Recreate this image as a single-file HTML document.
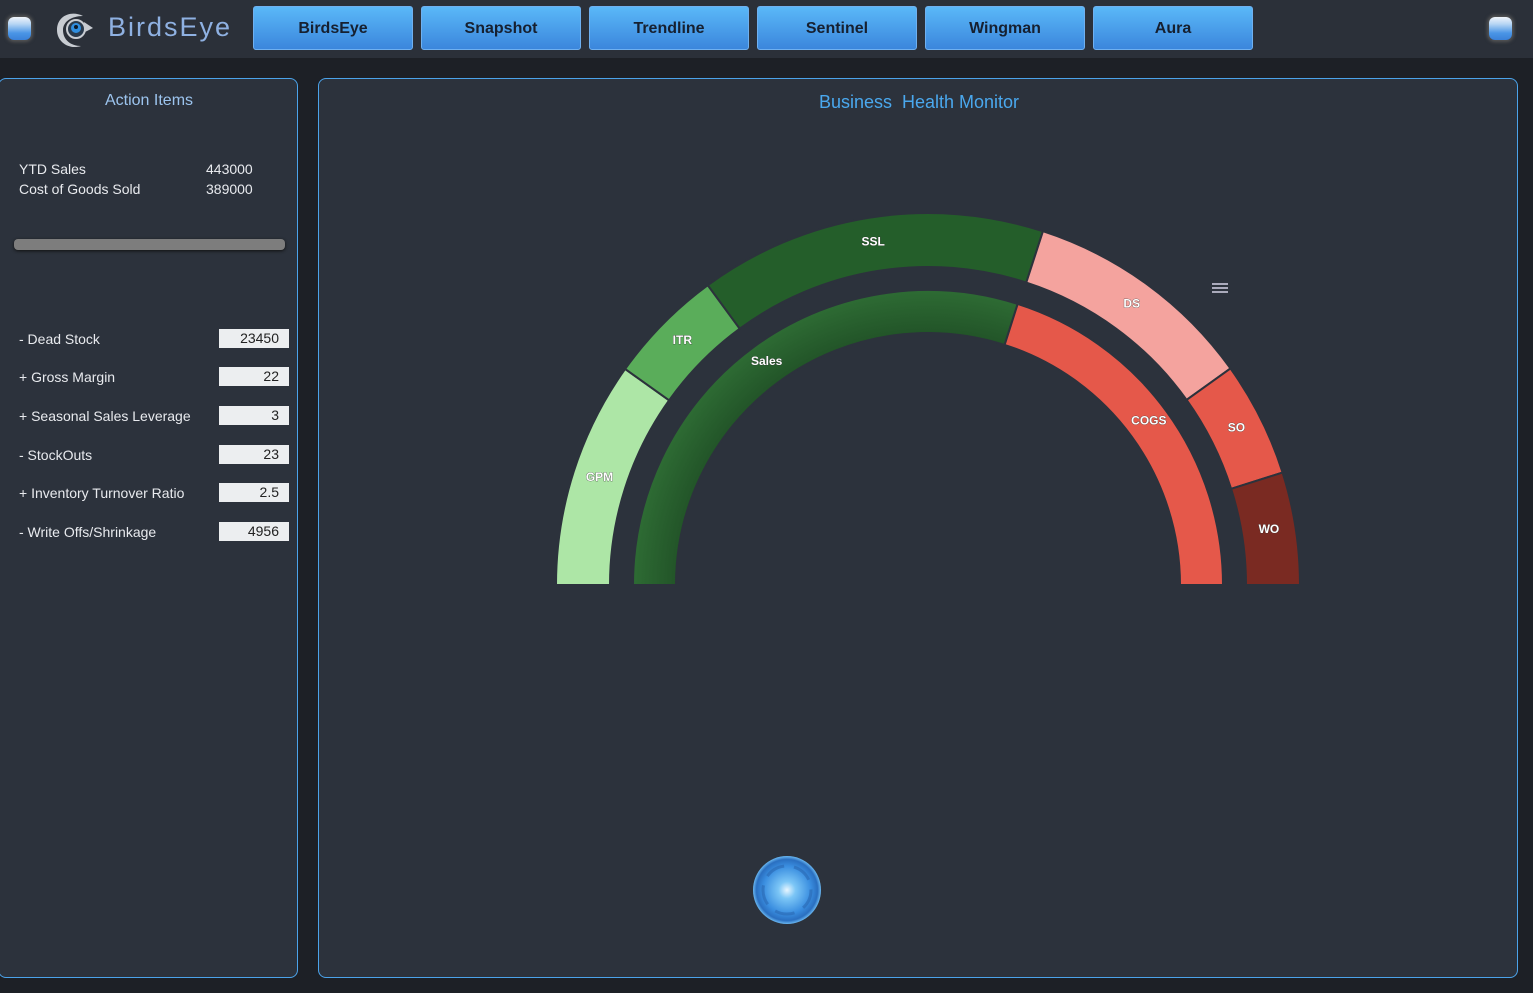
<!DOCTYPE html>
<html><head><meta charset="utf-8">
<style>
*{margin:0;padding:0;box-sizing:border-box}
body{width:1533px;height:993px;background:#1d2026;font-family:"Liberation Sans",sans-serif;position:relative;overflow:hidden;color:#e6e8ec}
.top{position:absolute;left:0;top:0;width:1533px;height:58px;background:#2b3039}
.sq{position:absolute;width:23px;height:23px;border-radius:6px;background:linear-gradient(#f0f4fa 0%,#b8d6f4 30%,#4a95e6 70%,#3a80d8 100%);box-shadow:0 0 3px 2px #555}
.btn{position:absolute;top:6px;width:160px;height:44px;border-radius:3px;background:linear-gradient(#5ab8f8,#3b86dc);color:#162030;font-weight:bold;font-size:16px;text-align:center;line-height:44px;border:1px solid #6fb0f0}
.panel{position:absolute;background:#2c323c;border:1px solid #4ba3ea;border-radius:8px}
.row{position:absolute;left:19px;font-size:14px;color:#e8eaee}
.val{position:absolute;left:219px;width:70px;height:19px;background:#eceef0;color:#222;font-size:14px;text-align:right;padding-right:10px;line-height:19px}
</style></head><body>
<div class="top">
 <div class="sq" style="left:8px;top:17px"></div>
 <svg style="position:absolute;left:53px;top:10px" width="42" height="40" viewBox="0 0 42 40">
  <path d="M30 6 C18 0 4 6 4 20 C4 32 16 40 28 36 C18 36 10 30 10 20 C10 12 18 6 30 6Z" fill="#c8ccd2"/>
  <circle cx="23" cy="19" r="9" fill="#2a3a4c" stroke="#c8ccd2" stroke-width="2"/>
  <circle cx="23" cy="18" r="5" fill="#2f8ee0"/>
  <circle cx="23" cy="17" r="2" fill="#0e1a28"/>
  <path d="M31 12 L40 18 L32 22Z" fill="#c8ccd2"/>
 </svg>
 <div style="position:absolute;left:108px;top:12px;font-size:27px;color:#8fb1e2;letter-spacing:2px">BirdsEye</div>
 <div class="btn" style="left:253px">BirdsEye</div>
 <div class="btn" style="left:421px">Snapshot</div>
 <div class="btn" style="left:589px">Trendline</div>
 <div class="btn" style="left:757px">Sentinel</div>
 <div class="btn" style="left:925px">Wingman</div>
 <div class="btn" style="left:1093px">Aura</div>
 <div class="sq" style="left:1489px;top:17px"></div>
</div>

<div class="panel" style="left:-2px;top:78px;width:300px;height:900px">
 <div style="position:absolute;left:0;width:300px;top:13px;text-align:center;color:#9cc4ee;font-size:16px">Action Items</div>
</div>
<div class="row" style="top:161px">YTD Sales</div><div class="row" style="top:161px;left:206px">443000</div>
<div class="row" style="top:181px">Cost of Goods Sold</div><div class="row" style="top:181px;left:206px">389000</div>
<div style="position:absolute;left:14px;top:239px;width:271px;height:11px;border-radius:4px;background:#7d7d7d;box-shadow:0 1px 3px #111"></div>
<div class="row" style="top:331px">- Dead Stock</div><div class="val" style="top:329px">23450</div>
<div class="row" style="top:369px">+ Gross Margin</div><div class="val" style="top:367px">22</div>
<div class="row" style="top:408px">+ Seasonal Sales Leverage</div><div class="val" style="top:406px">3</div>
<div class="row" style="top:447px">- StockOuts</div><div class="val" style="top:445px">23</div>
<div class="row" style="top:485px">+ Inventory Turnover Ratio</div><div class="val" style="top:483px">2.5</div>
<div class="row" style="top:524px">- Write Offs/Shrinkage</div><div class="val" style="top:522px">4956</div>

<div class="panel" style="left:318px;top:78px;width:1200px;height:900px">
 <div style="position:absolute;left:0;width:1200px;top:13px;text-align:center;color:#4aa8ee;font-size:18px">Business&nbsp; Health Monitor</div>
</div>
<div style="position:absolute;left:1212px;top:283px;width:16px;height:2px;background:#aab;box-shadow:0 4px 0 #aab,0 8px 0 #aab"></div>

<svg id="g" style="position:absolute;left:0;top:0" width="1533" height="993">
 <defs>
  <radialGradient id="sg" cx="928" cy="585" r="300" gradientUnits="userSpaceOnUse">
   <stop offset="0.8" stop-color="#1f4e25"/><stop offset="1" stop-color="#2f6e35"/>
  </radialGradient>
  <radialGradient id="orb" cx="0.5" cy="0.5" r="0.5">
   <stop offset="0" stop-color="#e8f6ff"/><stop offset="0.25" stop-color="#7cc6f6"/><stop offset="0.7" stop-color="#3a8ee0"/><stop offset="0.9" stop-color="#2a6fc0"/><stop offset="1" stop-color="#6ab8f2"/>
  </radialGradient>
 </defs>
 <circle cx="787" cy="890" r="34" fill="url(#orb)"/>
 <circle cx="787" cy="890" r="24" fill="none" stroke="#2a68b0" stroke-width="3" stroke-dasharray="20 10" opacity="0.6"/>
</svg>
<script>
var cx=928,cy=585,svg=document.getElementById('g'),NS='http://www.w3.org/2000/svg';
function P(r,a){a=a*Math.PI/180;return [cx-r*Math.cos(a),cy-r*Math.sin(a)];}
function seg(r0,r1,a0,a1,fill,label){
 var p1=P(r1,a0),p2=P(r1,a1),p3=P(r0,a1),p4=P(r0,a0),l=(a1-a0)>180?1:0;
 var d='M'+p1+' A'+r1+' '+r1+' 0 '+l+' 1 '+p2+' L'+p3+' A'+r0+' '+r0+' 0 '+l+' 0 '+p4+'Z';
 var e=document.createElementNS(NS,'path');e.setAttribute('d',d);e.setAttribute('fill',fill);e.setAttribute('stroke','#2c323c');e.setAttribute('stroke-width','2');svg.appendChild(e);
 var m=P((r0+r1)/2,(a0+a1)/2),t=document.createElementNS(NS,'text');
 t.setAttribute('x',m[0]);t.setAttribute('y',m[1]+1);t.setAttribute('text-anchor','middle');
 t.setAttribute('font-family','Liberation Sans, sans-serif');t.setAttribute('font-size','12');t.setAttribute('font-weight','bold');
 t.setAttribute('fill','#fff');t.setAttribute('stroke','#333');t.setAttribute('stroke-width','0.6');t.setAttribute('paint-order','stroke');
 t.textContent=label;svg.appendChild(t);
}
seg(318,372,0,35.5,'#ade6a6','GPM');
seg(318,372,35.5,53.7,'#5aad5a','ITR');
seg(318,372,53.7,108,'#245e2a','SSL');
seg(318,372,108,144.4,'#f4a39e','DS');
seg(318,372,144.4,162.4,'#e5584a','SO');
seg(318,372,162.4,180,'#7a2a22','WO');
seg(252,295,0,107.7,'url(#sg)','Sales');
seg(252,295,107.7,180,'#e5584a','COGS');
</script>
</body></html>
